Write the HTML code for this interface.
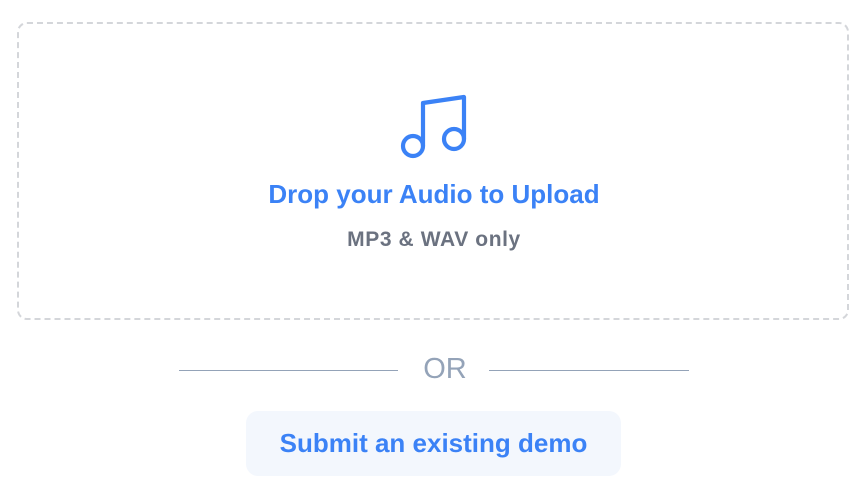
<!DOCTYPE html>
<html><head><style>
body{margin:0;width:868px;height:502px;background:#fff;font-family:"Liberation Sans",sans-serif;position:relative;overflow:hidden}
.box{position:absolute;left:17px;top:22px;width:832px;height:298px;border:2px dashed #d4d6da;border-radius:10px;box-sizing:border-box}
.t1{position:absolute;left:0;width:868px;top:179px;text-align:center;font-size:26px;font-weight:bold;color:#3b82f6;letter-spacing:0}
.t2{position:absolute;left:0;width:868px;top:228px;text-align:center;font-size:21px;font-weight:bold;color:#6b7280;letter-spacing:0.6px}
.line{position:absolute;top:370px;height:1px;background:#94a3b8}
.or{position:absolute;left:11px;width:868px;top:353px;text-align:center;font-size:29px;color:#94a3b8}
.btn{position:absolute;left:246px;top:411px;width:375px;height:65px;background:#f3f7fd;border-radius:12px;text-align:center;line-height:64px;font-size:26px;font-weight:bold;color:#3b82f6}
</style></head><body>
<div class="box"></div>
<svg style="position:absolute;left:0;top:0" width="868" height="502">
<g fill="none" stroke="#3b82f6" stroke-width="4.2" stroke-linecap="round" stroke-linejoin="round">
<circle cx="413" cy="146" r="10"/>
<circle cx="454" cy="139" r="10"/>
<path d="M423 146 V103 L464 97 V139"/>
</g></svg>
<div class="t1">Drop your Audio to Upload</div>
<div class="t2">MP3 &amp; WAV only</div>
<div class="line" style="left:179px;width:219px"></div>
<div class="line" style="left:489px;width:200px"></div>
<div class="or">OR</div>
<div class="btn">Submit an existing demo</div>
</body></html>
